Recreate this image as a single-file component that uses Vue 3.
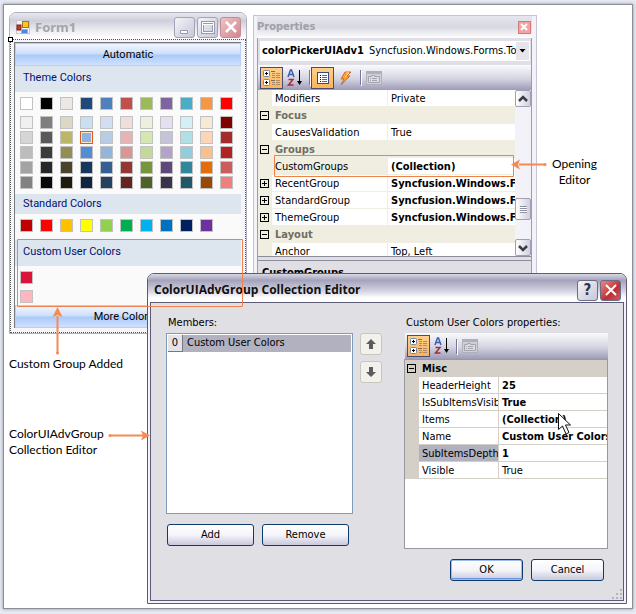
<script setup>
const swatchRows = [
  ['#ffffff', '#000000', '#ece9e4', '#1f497d', '#4f81bd', '#c0504d', '#9bbb59', '#8064a2', '#4bacc6', '#f79646', '#ff0000'],
  ['#f0f0f0', '#7f7f7f', '#ddd7c5', '#cbdff2', '#d3dff0', '#f0dedd', '#eef0dd', '#e5dff0', '#d3f0f7', '#f8e8d7', '#800000'],
  ['#d5d5d5', '#595959', '#bcb766', '#8db3e2', '#b8cce4', '#e5b5b5', '#d6e6b2', '#c3c4d8', '#b0e0e6', '#fbd5b5', '#a52a2a'],
  ['#bcbcbc', '#3b3b3b', '#938f54', '#548dd4', '#93b5da', '#d99694', '#c4d898', '#b2a4c8', '#92cddc', '#f8bf8f', '#b22222'],
  ['#a3a3a3', '#272727', '#49442a', '#17375e', '#366092', '#943634', '#76963a', '#5f497a', '#31869b', '#e46c0a', '#cd5c5c'],
  ['#828282', '#080808', '#1d1b10', '#0f243e', '#254061', '#632423', '#4f6228', '#3a334b', '#205867', '#984807', '#f08080'],
]
const standardColors = ['#c00000', '#ff0000', '#ffc000', '#ffff00', '#92d050', '#00b050', '#00b0f0', '#0070c0', '#002060', '#7030a0']
const customColors = ['#dc143c', '#ffb6c1']

const properties = [
  { name: 'Modifiers', value: 'Private' },
  { name: 'Focus', group: true },
  { name: 'CausesValidation', value: 'True' },
  { name: 'Groups', group: true },
  { name: 'CustomGroups', value: '(Collection)', bold: true, current: true },
  { name: 'RecentGroup', value: 'Syncfusion.Windows.Forms.Tools', bold: true, expand: true },
  { name: 'StandardGroup', value: 'Syncfusion.Windows.Forms.Tools', bold: true, expand: true },
  { name: 'ThemeGroup', value: 'Syncfusion.Windows.Forms.Tools', bold: true, expand: true },
  { name: 'Layout', group: true },
  { name: 'Anchor', value: 'Top, Left' },
]
const groupProperties = [
  { name: 'Misc', group: true },
  { name: 'HeaderHeight', value: '25', bold: true },
  { name: 'IsSubItemsVisible', value: 'True', bold: true },
  { name: 'Items', value: '(Collection)', bold: true },
  { name: 'Name', value: 'Custom User Colors', bold: true },
  { name: 'SubItemsDepth', value: '1', bold: true, selected: true },
  { name: 'Visible', value: 'True' },
]
</script>

<template>
  <main class="desktop">
    <section class="form-window" aria-label="Form1">
      <header class="form-title">
        <svg class="form-icon" width="14" height="14" viewBox="0 0 14 14">
          <rect x="0.5" y="0.5" width="13" height="13" fill="#f4f4f8" stroke="#c8c8d4" />
          <rect x="1" y="5" width="4" height="5" fill="#c33a2c" stroke="#7a2018" />
          <rect x="6.500" y="1.500" width="6" height="6" fill="#f8c630" stroke="#a87808" />
          <rect x="5.500" y="9.500" width="6" height="4" fill="#4b86e4" stroke="#8fb4ee" />
        </svg>
        <h1>Form1</h1>
        <button class="caption" aria-label="Minimize"><svg width="18" height="18" viewBox="0 0 18 18"><path d="M4.500 12.500h7v3h-7z" fill="#fff" stroke="#9a9aae" /></svg></button>
        <button class="caption" aria-label="Maximize"><svg width="18" height="18" viewBox="0 0 18 18"><path d="M3.500 4.500h11v10h-11z" fill="none" stroke="#9a9aae" stroke-width="3" /><path d="M3.500 4.500h11v10h-11z" fill="none" stroke="#fff" /><path d="M4 6.500h10" stroke="#fff" /></svg></button>
        <button class="caption close faded" aria-label="Close"><svg width="18" height="18" viewBox="0 0 18 18"><path d="M4 4l10 10M14 4L4 14" stroke="#fff" stroke-width="2.500" /></svg></button>
      </header>
      <div class="form-client">
        <div class="picker">
          <button class="bar">Automatic</button>
          <h2 class="band tall">Theme Colors</h2>
          <div class="swatches theme">
            <div v-for="(row, r) in swatchRows" :key="r" class="swatch-row">
              <button v-for="(c, i) in row" :key="c" class="swatch" :class="{ active: r === 2 && i === 3 }" :style="{ backgroundColor: c }" :aria-label="c"></button>
            </div>
          </div>
          <h2 class="band">Standard Colors</h2>
          <div class="swatches standard">
            <div class="swatch-row">
              <button v-for="c in standardColors" :key="c" class="swatch" :style="{ backgroundColor: c }" :aria-label="c"></button>
            </div>
          </div>
          <h2 class="band tall">Custom User Colors</h2>
          <div class="swatches custom">
            <button v-for="c in customColors" :key="c" class="swatch" :style="{ backgroundColor: c }" :aria-label="c"></button>
          </div>
          <button class="bar">More Colors...</button>
        </div>
      </div>
      <span class="handle"></span>
    </section>

    <section class="props-window" aria-label="Properties">
      <header class="props-title">
        <h1>Properties</h1>
        <button class="small-close" aria-label="Close properties"><svg width="12" height="12" viewBox="0 0 12 12"><path d="M3 3l6 6M9 3L3 9" stroke="#fff" stroke-width="2" /></svg></button>
      </header>
      <div class="props-body">
        <div class="combo">
          <label for="component">colorPickerUIAdv1</label>
          <select id="component"><option>Syncfusion.Windows.Forms.Tools.ColorPickerUIAdv</option></select>
          <span class="arrow"><svg width="7" height="4" viewBox="0 0 7 4"><path d="M0.500 0h6L3.500 3.500z" fill="#000" /></svg></span>
        </div>
        <div class="toolbar">
          <button class="tool on" aria-label="Categorized">
            <svg width="20" height="20" viewBox="0 0 20 20"><g fill="#fff" stroke="#6f87a8"><rect x="1.500" y="2.500" width="6" height="6" rx="1" /><rect x="1.500" y="11.500" width="6" height="6" rx="1" /></g><path d="M3 5.500h3M4.500 4v3M3 14.500h3M4.500 13v3" stroke="#000" /><path d="M9 3.500h4M9 12.500h4" stroke="#8a6a48" /><path d="M10 5.500h3M10 7.500h3M10 9.500h3M10 14.500h3M10 16.500h3M14 5.500h4M14 7.500h4M14 9.500h4M14 12.500h4M14 14.500h4M14 16.500h4" stroke="#a88c70" /></svg>
          </button>
          <button class="tool" aria-label="Alphabetical">
            <svg width="20" height="20" viewBox="0 0 20 20"><path d="M3 9l2.500-7h1L9 9M4 6.500h4" fill="none" stroke="#3f5fae" stroke-width="1.500" /><path d="M3.500 11.500H8l-4.500 5.500h5" fill="none" stroke="#a3303c" stroke-width="1.500" /><path d="M14.500 2v14" stroke="#000" /><path d="M12 13h5l-2.500 4z" fill="#000" /></svg>
          </button>
          <i class="sep"></i>
          <button class="tool on" aria-label="Properties page">
            <svg width="20" height="20" viewBox="0 0 20 20"><rect x="4.500" y="4.500" width="11" height="11" fill="#fff" stroke="#3c4a78" /><path d="M7 7.500h1M7 9.500h1M7 11.500h1M7 13.500h1" stroke="#000" /><path d="M9 7.500h5M9 9.500h5M9 11.500h5M9 13.500h5" stroke="#666a80" /></svg>
          </button>
          <button class="tool" aria-label="Events">
            <svg width="20" height="20" viewBox="0 0 20 20"><path d="M9 4h6l-4 4h3L5 17l3-6H5z" fill="#f6a030" stroke="#d0542c" stroke-width="0.800" /><path d="M10 5h3l-4 4" fill="none" stroke="#ffe090" /></svg>
          </button>
          <i class="sep"></i>
          <button class="tool" disabled aria-label="Property pages">
            <svg width="20" height="20" viewBox="0 0 20 20"><rect x="2.500" y="3.500" width="15" height="13" fill="#d0d0d8" stroke="#b0b0b8" /><path d="M3 5h14" stroke="#b0b0b8" stroke-width="2" /><path d="M4.500 8.500h3v-1h3v1h5v6h-11z" fill="#dcdce2" stroke="#a4a4ac" /><path d="M6 10.500h1M8 10.500h5M6 12.500h1M8 12.500h5" stroke="#a4a4ac" /></svg>
          </button>
        </div>
        <div class="grid-scroll">
          <table class="grid">
            <colgroup><col class="gutter" /><col class="name" /><col /></colgroup>
            <tbody>
              <tr v-for="p in properties" :key="p.name" :class="{ group: p.group, current: p.current }">
                <td><button v-if="p.group || p.expand" class="toggle" :class="{ plus: p.expand }" :aria-label="'Toggle ' + p.name"></button></td>
                <th :colspan="p.group ? 2 : 1" scope="row">{{ p.name }}</th>
                <td v-if="!p.group" :class="{ bold: p.bold }">{{ p.value }}</td>
              </tr>
            </tbody>
          </table>
          <div class="scrollbar">
            <button aria-label="Scroll up"><svg width="10" height="8" viewBox="0 0 10 8"><path d="M1 6l4-4 4 4" fill="none" stroke="#3c3c48" stroke-width="2.500" /></svg></button>
            <i class="thumb"></i>
            <button aria-label="Scroll down"><svg width="10" height="8" viewBox="0 0 10 8"><path d="M1 2l4 4 4-4" fill="none" stroke="#3c3c48" stroke-width="2.500" /></svg></button>
          </div>
        </div>
        <div class="description">CustomGroups</div>
      </div>
    </section>

    <section class="dialog" role="dialog" aria-label="ColorUIAdvGroup Collection Editor">
      <header class="dialog-title">
        <h1>ColorUIAdvGroup Collection Editor</h1>
        <button class="caption help" aria-label="Help">?</button>
        <button class="caption close" aria-label="Close editor"><svg width="18" height="18" viewBox="0 0 18 18"><path d="M4 4l10 10M14 4L4 14" stroke="#fff" stroke-width="2" /></svg></button>
      </header>
      <div class="dialog-body">
        <div class="columns">
          <div class="members">
            <h2>Members:</h2>
            <ul class="list"><li><span class="index">0</span><span>Custom User Colors</span></li></ul>
            <div class="pair">
              <button class="push">Add</button>
              <button class="push">Remove</button>
            </div>
          </div>
          <div class="order">
            <button aria-label="Move up"><svg width="12" height="12" viewBox="0 0 12 12"><path d="M6 1l5 5H8v5H4V6H1z" fill="#5c5c5c" /></svg></button>
            <button aria-label="Move down"><svg width="12" height="12" viewBox="0 0 12 12"><path d="M6 11l5-5H8V1H4v5H1z" fill="#5c5c5c" /></svg></button>
          </div>
          <div class="details">
            <h2>Custom User Colors properties:</h2>
            <div class="toolbar">
              <button class="tool on" aria-label="Categorized">
                <svg width="20" height="20" viewBox="0 0 20 20"><g fill="#fff" stroke="#6f87a8"><rect x="1.500" y="2.500" width="6" height="6" rx="1" /><rect x="1.500" y="11.500" width="6" height="6" rx="1" /></g><path d="M3 5.500h3M4.500 4v3M3 14.500h3M4.500 13v3" stroke="#000" /><path d="M9 3.500h4M9 12.500h4" stroke="#8a6a48" /><path d="M10 5.500h3M10 7.500h3M10 9.500h3M10 14.500h3M10 16.500h3M14 5.500h4M14 7.500h4M14 9.500h4M14 12.500h4M14 14.500h4M14 16.500h4" stroke="#a88c70" /></svg>
              </button>
              <button class="tool" aria-label="Alphabetical">
                <svg width="20" height="20" viewBox="0 0 20 20"><path d="M3 9l2.500-7h1L9 9M4 6.500h4" fill="none" stroke="#3f5fae" stroke-width="1.500" /><path d="M3.500 11.500H8l-4.500 5.500h5" fill="none" stroke="#a3303c" stroke-width="1.500" /><path d="M14.500 2v14" stroke="#000" /><path d="M12 13h5l-2.500 4z" fill="#000" /></svg>
              </button>
              <i class="sep"></i>
              <button class="tool" disabled aria-label="Property pages">
                <svg width="20" height="20" viewBox="0 0 20 20"><rect x="2.500" y="3.500" width="15" height="13" fill="#d0d0d8" stroke="#b0b0b8" /><path d="M3 5h14" stroke="#b0b0b8" stroke-width="2" /><path d="M4.500 8.500h3v-1h3v1h5v6h-11z" fill="#dcdce2" stroke="#a4a4ac" /><path d="M6 10.500h1M8 10.500h5M6 12.500h1M8 12.500h5" stroke="#a4a4ac" /></svg>
              </button>
            </div>
            <div class="detail-grid">
              <table class="grid gray">
                <colgroup><col class="gutter" /><col class="name" /><col /></colgroup>
                <tbody>
                  <tr v-for="p in groupProperties" :key="p.name" :class="{ group: p.group, selected: p.selected }">
                    <td><button v-if="p.group" class="toggle" :aria-label="'Toggle ' + p.name"></button></td>
                    <th :colspan="p.group ? 2 : 1" scope="row">{{ p.name }}</th>
                    <td v-if="!p.group" :class="{ bold: p.bold }">{{ p.value }}</td>
                  </tr>
                </tbody>
              </table>
            </div>
          </div>
        </div>
        <footer class="pair actions">
          <button class="push default">OK</button>
          <button class="push">Cancel</button>
        </footer>
        <svg class="grip" width="12" height="12" viewBox="0 0 12 12"><path d="M9 1h2v2H9zM5 5h2v2H5zM9 5h2v2H9zM1 9h2v2H1zM5 9h2v2H5zM9 9h2v2H9z" fill="#b4b4bc" /></svg>
      </div>
    </section>

    <svg class="callouts" width="636" height="614" viewBox="0 0 636 614">
      <g fill="none" stroke="#f0824c">
        <path d="M17.500 239.500h225v67h-225z" />
        <path d="M274.500 155.500h239v21h-239z" />
      </g>
      <g stroke="#f58a54" stroke-width="2">
        <path d="M57.500 353V316" /><path d="M110 435.500h34" /><path d="M545 164.500h-26" />
      </g>
      <g fill="#f58a54">
        <path d="M57.500 307l5 10-5-2-5 2z" /><path d="M150 435.500l-9-5 2 5-2 5z" /><path d="M511 164.500l9-5-2 5 2 5z" />
        <circle cx="57.500" cy="353" r="1.500" /><circle cx="110" cy="435.500" r="1.500" /><circle cx="545" cy="164.500" r="1.500" />
      </g>
      <path d="M558.500 413.500v16l4-3.500 3.500 8 3-1.500-3.500-7.500h5z" fill="#fff" stroke="#111" />
    </svg>
    <p class="note opening">Opening<br />Editor</p>
    <p class="note added">Custom Group Added</p>
    <p class="note editor">ColorUIAdvGroup<br />Collection Editor</p>
  </main>
</template>

<style>
body { margin: 0; background: #e6e9f1; }
</style>

<style scoped>
* { box-sizing: border-box; }
h1, h2, p, ul { margin: 0; padding: 0; font: inherit; }
button { margin: 0; padding: 0; font: inherit; color: inherit; border: 0; background: none; }
svg { display: block; flex: none; }
.desktop {
  position: relative;
  min-height: 614px;
  overflow: hidden;
  font: 11px/16px "DejaVu Sans Condensed", "DejaVu Sans", sans-serif;
  color: #000;
  background: #e6e9f1;
}
.desktop::before {
  content: "";
  position: absolute;
  inset: 4px 3px 5px 3px;
  background: #fff;
  border: 1px solid #8c8e98;
  box-shadow: 0 0 3px #8c8e98;
}

/* Form window */
.form-window {
  position: absolute;
  left: 9px;
  top: 12px;
  width: 238px;
  border: 1px solid #b0b0c0;
  border-radius: 7px 7px 0 0;
  background: #f0f0f6;
}
.form-title {
  display: flex;
  align-items: center;
  gap: 2px;
  height: 26px;
  padding: 2px 5px 0 6px;
  border-radius: 6px 6px 0 0;
  background: linear-gradient(#e8e8ee, #cfcfdc 30%, #f2f2f6 75%, #fff);
}
.form-title h1 {
  flex: 1;
  padding-left: 3px;
  font: bold 13px/18px "Noto Sans", sans-serif;
  color: #a4a4aa;
}
.caption {
  display: flex;
  align-items: center;
  justify-content: center;
  width: 21px;
  height: 21px;
  border: 1px solid #a2a2b8;
  border-radius: 3px;
  background: linear-gradient(135deg, #f4f4fa, #c6c6d8);
}
.close { border-color: #93404a; background: linear-gradient(135deg, #e88a84, #bf2f35 60%, #cf5a5a); }
.faded { border-color: #c08c98; background: linear-gradient(135deg, #ecc4c8, #d5848e); }
.form-client { border: 1px dotted #555; padding: 2px 4px 4px 3px; background: #f6f6fa; }
.picker {
  display: flex;
  flex-direction: column;
  border: solid #77797f;
  border-width: 1px 0 0 1px;
  background: #fafafa;
  font: 11px/16px Roboto, sans-serif;
}
.bar {
  height: 23px;
  border: 1px solid #b8cff2;
  background: linear-gradient(#f0f6ff, #cbdefb 48%, #a9c9f8 52%, #cfe2ff);
}
.band { height: 20px; padding: 0 8px; line-height: 20px; color: #001170; background: #dde6ee; }
.tall { height: 26px; line-height: 24px; }
.swatches { display: flex; flex-direction: column; gap: 2px; padding: 5px 5px 0; }
.theme { height: 102px; }
.theme .swatch-row:first-child { margin-bottom: 4px; }
.standard { height: 26px; }
.custom { height: 39px; gap: 6px; }
.swatch-row { display: flex; gap: 7px; }
.swatch { flex: none; width: 13px; height: 13px; border: 1px solid #c2c2c2; }
.swatch.active { border-color: #e0581c; box-shadow: inset 0 0 0 1px #ffe2c0; }
.handle { position: absolute; left: -2px; top: 24px; width: 5px; height: 5px; border: 1px solid #000; background: #fff; }

/* Properties window */
.props-window {
  position: absolute;
  left: 253px;
  top: 15px;
  width: 284px;
  padding: 0 4px 4px 3px;
  border: 1px solid #c4c4d2;
  background: #f2f2f8;
}
.props-title { display: flex; align-items: center; height: 22px; padding-right: 1px; background: linear-gradient(#e6e6ee, #d8d8e2 50%, #fff); }
.props-title h1 { flex: 1; font: bold 11px/18px "DejaVu Sans Condensed", "DejaVu Sans", sans-serif; color: #a0a0a8; }
.small-close { width: 13px; height: 13px; border: 1px solid #d87878; background: #f0a4a4; }
.small-close svg { margin: -1px; }
.props-body { border: solid #9c9caa; border-width: 0 1px; background: #e0dfe6; padding-top: 3px; }
.combo { display: flex; align-items: center; height: 20px; margin: 0 1px 4px 2px; padding: 0 1px 0 2px; gap: 5px; background: #fff; }
.combo label { font-weight: bold; }
.combo select { flex: 1; min-width: 0; padding: 0; border: 0; appearance: none; background: none; font: inherit; color: inherit; text-overflow: clip; }
.arrow { display: flex; align-items: center; justify-content: center; width: 13px; height: 18px; margin-left: -5px; background: #e6e5ec; }
.toolbar { display: flex; align-items: center; height: 25px; padding: 0 2px; background: linear-gradient(#fafafd, #d4d4e2 55%, #9d9bb7); }
.tool { display: flex; align-items: center; justify-content: center; width: 23px; height: 22px; }
.on { border: 1px solid #4b4b6f; background: linear-gradient(#fdd08c, #fbb45a); }
.sep { width: 1px; height: 15px; margin: 0 1px 0 3px; background: #77769a; box-shadow: 1px 1px 0 #fff; }
.grid-scroll { display: flex; height: 167px; overflow: hidden; border-bottom: 1px solid #8c8c98; background: #fff; }
.grid { flex: 1; width: 100%; min-width: 0; table-layout: fixed; border-collapse: separate; border-spacing: 0; }
.gutter { width: 14px; }
.name { width: 116px; }
.grid tr { height: 17px; }
.grid td, .grid th {
  height: 17px;
  padding: 2px 0 0 3px;
  overflow: hidden;
  white-space: nowrap;
  text-align: left;
  font-weight: normal;
  line-height: 14px;
  border: solid #efeee1;
  border-width: 0 0 1px 0;
}
.grid th { border-right-width: 1px; }
.grid td:first-child { padding: 0 2px; background: #efeee1; }
.grid .group th { font-weight: bold; color: #6f6f64; background: #efeee1; }
.grid .current th { background: #efeee1; }
.grid .bold { font-weight: bold; }
.grid.gray td, .grid.gray th { border-color: #d4d0c8; }
.grid.gray td:first-child, .grid.gray .group th { background: #d4d0c8; }
.grid.gray .group th { color: #000; }
.gray .name { width: 80px; }
.grid.gray .selected th { background: #b1b1bf; }
.toggle { display: block; width: 9px; height: 9px; border: 1px solid #000; background: linear-gradient(#000, #000) center / 5px 1px no-repeat; }
.plus { background: linear-gradient(#000, #000) center / 5px 1px no-repeat, linear-gradient(#000, #000) center / 1px 5px no-repeat; }
.scrollbar { display: flex; flex-direction: column; width: 16px; background: #f3f2f8; }
.scrollbar button, .thumb { display: flex; align-items: center; justify-content: center; height: 17px; border: 1px solid #a0a0b4; border-radius: 2px; background: linear-gradient(90deg, #fff, #cfcfdf); }
.thumb { height: 22px; margin: auto 0 19px; }
.thumb::before { content: ""; width: 7px; height: 7px; background: repeating-linear-gradient(#8f8fa4 0 1px, #fff 1px 2px); }
.description { height: 40px; margin-top: 3px; padding: 4px; border-top: 1px solid #8c8c98; font-weight: bold; }

/* Collection editor */
.dialog {
  position: absolute;
  left: 147px;
  right: 9px;
  top: 273px;
  padding: 0 2px 2px;
  border: 1px solid #5c5b76;
  border-radius: 7px 7px 0 0;
  background: #f4f4f8;
}
.dialog-title {
  display: flex;
  align-items: center;
  gap: 2px;
  height: 28px;
  margin: 0 -2px;
  padding: 4px 5px 0 6px;
  border-radius: 6px 6px 0 0;
  background: linear-gradient(#d8d8e4, #a3a2bb 22%, #d2d2df 60%, #fff 85%);
}
.dialog-title h1 { flex: 1; font: bold 12px/18px "Open Sans", sans-serif; color: #101010; }
.dialog .caption { border-color: #6c6b88; }
.help { font-weight: bold; font-size: 15px; color: #33334a; }
.dialog-body { position: relative; padding: 10px 15px 19px; border: 1px solid #5c5b76; background: #e0dfe3; }
.columns { display: flex; }
.columns h2 { height: 20px; padding-left: 2px; line-height: 20px; }
.members { width: 187px; }
.list { height: 181px; padding: 1px; list-style: none; border: 1px solid #7f9db9; background: #fff; }
.list li { display: flex; gap: 4px; height: 17px; background: #b1b1bf; }
.index { width: 15px; text-align: center; background: #e4e3e8; border: solid #77777f; border-width: 0 1px 1px 0; }
.pair { display: flex; gap: 8px; margin-top: 10px; }
.push { flex: 1; height: 22px; border: 1px solid #0d3b6e; border-radius: 3px; background: linear-gradient(#fff, #f4f4fa 50%, #c9c8dc); }
.members .pair { padding: 0 4px 0 1px; }
.default { box-shadow: inset 0 0 0 1px #9dbcf0, inset 0 -2px 0 #6a94de; }
.order { display: flex; flex-direction: column; gap: 6px; margin: 20px 22px 0 7px; }
.order button { display: flex; align-items: center; justify-content: center; width: 22px; height: 22px; border: 1px solid #c8c7be; border-radius: 3px; background: #f2f1ec; }
.details { flex: 1; min-width: 0; }
.details .toolbar { height: 26px; margin-left: 1px; }
.detail-grid { height: 190px; border: 1px solid #98989f; background: #fff; }
.actions { justify-content: flex-end; margin-right: 4px; }
.actions .push { flex: none; width: 73px; }
.grip { position: absolute; right: 0; bottom: 0; }

/* Callouts */
.callouts { position: absolute; left: 0; top: 0; pointer-events: none; }
.note { position: absolute; font: 12px/16px Lato, sans-serif; }
.opening { left: 552px; top: 156px; text-align: center; }
.added { left: 9px; top: 356px; }
.editor { left: 9px; top: 426px; }
</style>
